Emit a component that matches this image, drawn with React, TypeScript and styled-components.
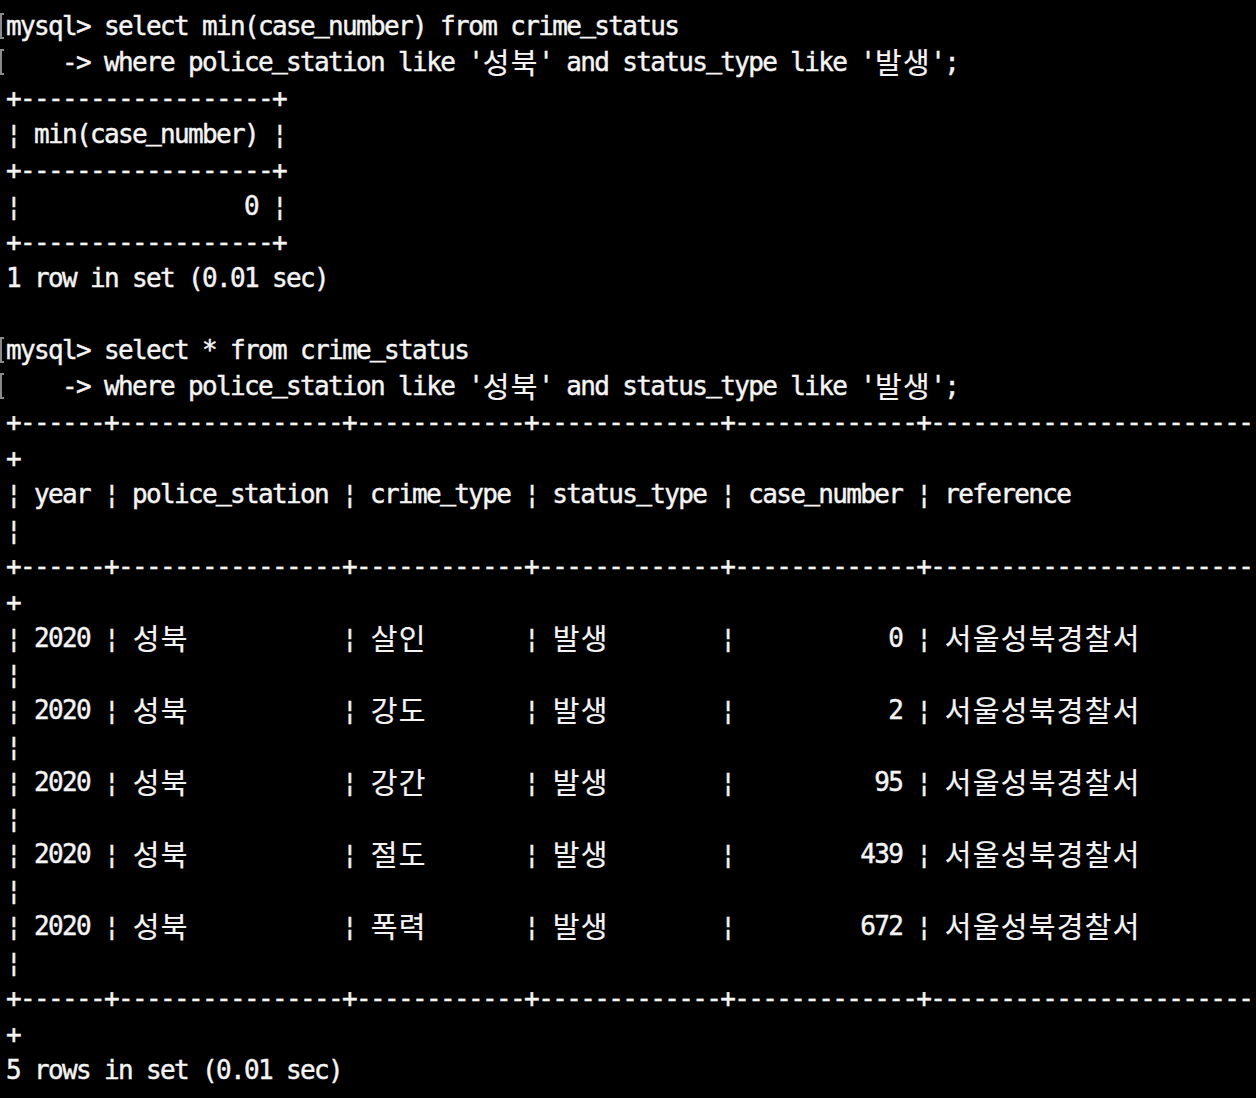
import React from "react";
import styled, { createGlobalStyle } from "styled-components";

const GlobalStyle = createGlobalStyle`
  html, body {
    margin: 0;
    padding: 0;
    background: #000;
  }
  #root {
    min-height: 1098px;
    background: #000;
  }
`;

const Terminal = styled.div`
  width: 1256px;
  height: 1098px;
  box-sizing: border-box;
  padding-top: 8px;
  background: #000;
  overflow: hidden;
`;

const Row = styled.div`
  display: flex;
  height: 36px;
  align-items: flex-start;
`;

const Gutter = styled.div`
  width: 6px;
  height: 36px;
  flex: none;
  display: flex;
  align-items: center;
`;

const Mark = styled.span<{ $show: boolean }>`
  display: block;
  width: 4px;
  height: 26px;
  box-sizing: border-box;
  border: 2px solid #8a8a8a;
  border-right: none;
  visibility: ${(p) => (p.$show ? "visible" : "hidden")};
`;

const Text = styled.pre`
  margin: 0;
  height: 36px;
  line-height: 36px;
  font-family: "DejaVu Sans Mono", "Liberation Mono", monospace;
  font-size: 26px;
  letter-spacing: -1.65px;
  color: #f4f4f4;
  -webkit-text-stroke: 0.45px #f4f4f4;
  white-space: pre;
`;

const Hangul = styled.span`
  display: inline-block;
  width: 28px;
  height: 36px;
  vertical-align: top;
  text-align: center;
  font-family: "Noto Sans CJK KR", "Noto Sans CJK SC", sans-serif;
  font-size: 29px;
  letter-spacing: 0;
  line-height: 34px;
  -webkit-text-stroke: 0.2px #f4f4f4;
`;

const Underscore = styled.span`
  position: relative;
  top: -3px;
  -webkit-text-stroke: 0.8px #f4f4f4;
`;

const SPLIT_RE = /([\uAC00-\uD7A3]|_)/;

function renderText(s: string) {
  return s.split(SPLIT_RE).map((part, i) => {
    if (i % 2 === 0) return <React.Fragment key={i}>{part}</React.Fragment>;
    if (part === "_") return <Underscore key={i}>_</Underscore>;
    return <Hangul key={i}>{part}</Hangul>;
  });
}

const dash = (n: number) => "-".repeat(n);
const sep = `+${dash(6)}+${dash(16)}+${dash(12)}+${dash(13)}+${dash(13)}+${dash(23)}`;
const where = "    -> where police_station like '성북' and status_type like '발생';";

const dataRows: [string, string][] = [
  ["살인", "0"],
  ["강도", "2"],
  ["강간", "95"],
  ["절도", "439"],
  ["폭력", "672"],
];

type Line = { text: string; mark?: boolean };

const lines: Line[] = [
  { text: "mysql> select min(case_number) from crime_status", mark: true },
  { text: where, mark: true },
  { text: `+${dash(18)}+` },
  { text: "¦ min(case_number) ¦" },
  { text: `+${dash(18)}+` },
  { text: `¦${" ".repeat(16)}0 ¦` },
  { text: `+${dash(18)}+` },
  { text: "1 row in set (0.01 sec)" },
  { text: "" },
  { text: "mysql> select * from crime_status", mark: true },
  { text: where, mark: true },
  { text: sep },
  { text: "+" },
  { text: "¦ year ¦ police_station ¦ crime_type ¦ status_type ¦ case_number ¦ reference" },
  { text: "¦" },
  { text: sep },
  { text: "+" },
  ...dataRows.flatMap(([crime, n]) => [
    {
      text: `¦ 2020 ¦ 성북${" ".repeat(10)} ¦ ${crime}${" ".repeat(6)} ¦ 발생${" ".repeat(7)} ¦ ${n.padStart(11)} ¦ 서울성북경찰서`,
    },
    { text: "¦" },
  ]),
  { text: sep },
  { text: "+" },
  { text: "5 rows in set (0.01 sec)" },
];

export default function App() {
  return (
    <>
      <GlobalStyle />
      <Terminal>
        {lines.map((l, i) => (
          <Row key={i}>
            <Gutter>
              <Mark $show={!!l.mark} />
            </Gutter>
            <Text>{renderText(l.text)}</Text>
          </Row>
        ))}
      </Terminal>
    </>
  );
}
